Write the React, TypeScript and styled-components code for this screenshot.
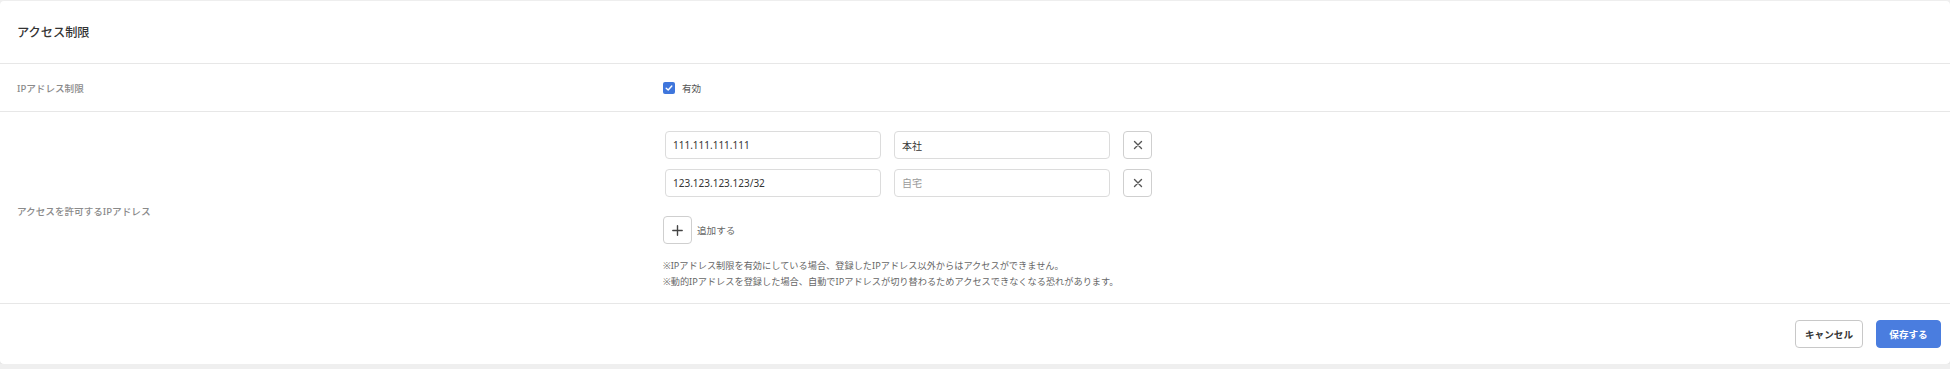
import React from "react";
import styled, { createGlobalStyle } from "styled-components";

const GlobalStyle = createGlobalStyle`
  html, body { margin: 0; padding: 0; }
  body {
    background: #efefef;
    font-family: "Noto Sans", "Noto Sans CJK JP", sans-serif;
    color: #333;
  }
  * { box-sizing: border-box; }
`;

const Card = styled.div`
  margin-top: 1px;
  background: #fff;
  border-radius: 4px;
  box-shadow: 0 1px 2px rgba(0, 0, 0, 0.08);
`;

const Header = styled.div`
  height: 63px;
  padding: 0 17px;
  display: flex;
  align-items: center;
  border-bottom: 1px solid #e7e7e7;
`;

const Title = styled.h2`
  margin: 0;
  font-size: 12.2px;
  font-weight: 500;
  color: #333;
`;

const Row = styled.div<{ $pad: string; $height?: number }>`
  display: grid;
  grid-template-columns: 646px 1fr;
  align-items: center;
  padding: ${(p) => p.$pad};
  padding-left: 17px;
  height: ${(p) => (p.$height ? `${p.$height}px` : "auto")};
  border-bottom: 1px solid #e7e7e7;
`;

const Label = styled.div`
  font-size: 9.6px;
  font-weight: 500;
  color: #8a8a8a;
`;

const CheckWrap = styled.label`
  display: flex;
  align-items: center;
  gap: 7px;
  font-size: 9.6px;
  color: #555;
`;

const CheckBox = styled.span`
  width: 12px;
  height: 12px;
  border-radius: 2px;
  background: #3f76dc;
  display: flex;
  align-items: center;
  justify-content: center;
`;

const Value = styled.div`
  display: flex;
  flex-direction: column;
`;

const EntryList = styled.div`
  display: flex;
  flex-direction: column;
  gap: 10px;
  margin-left: 2px;
`;

const Entry = styled.div`
  display: flex;
  gap: 13px;
`;

const TextInput = styled.input`
  width: 216px;
  height: 28px;
  border: 1px solid #dcdcdc;
  border-radius: 4px;
  padding: 0 7px;
  font-family: inherit;
  font-size: 10px;
  color: #333;
  outline: none;
  &::placeholder { color: #9a9a9a; }
`;

const IconButton = styled.button`
  width: 29px;
  height: 28px;
  border: 1px solid #cfcfcf;
  border-radius: 4px;
  background: #fff;
  padding: 0;
  display: flex;
  align-items: center;
  justify-content: center;
  cursor: pointer;
`;

const AddRow = styled.div`
  margin-top: 19px;
  display: flex;
  align-items: center;
  gap: 5px;
  font-size: 9.6px;
  color: #666;
`;

const Notes = styled.div`
  margin-top: 14px;
  font-size: 9.2px;
  line-height: 16px;
  color: #666;
`;

const Footer = styled.div`
  height: 60px;
  display: flex;
  justify-content: flex-end;
  align-items: center;
  gap: 13px;
  padding-right: 9px;
`;

const Button = styled.button<{ $primary?: boolean }>`
  height: 28px;
  min-width: 65px;
  padding: 0 9px;
  border-radius: 4px;
  font-family: inherit;
  font-size: 9.6px;
  font-weight: 700;
  cursor: pointer;
  border: 1px solid ${(p) => (p.$primary ? "#4a7ddf" : "#c8c8c8")};
  background: ${(p) => (p.$primary ? "#4a7ddf" : "#fff")};
  color: ${(p) => (p.$primary ? "#fff" : "#333")};
`;

const XIcon = () => (
  <svg width="10" height="10" viewBox="0 0 10 10">
    <path d="M1.5 1.5 L8.5 8.5 M8.5 1.5 L1.5 8.5" stroke="#555" strokeWidth="1.4" strokeLinecap="round" />
  </svg>
);

const PlusIcon = () => (
  <svg width="11" height="11" viewBox="0 0 11 11">
    <path d="M5.5 0.8 V10.2 M0.8 5.5 H10.2" stroke="#444" strokeWidth="1.4" strokeLinecap="round" />
  </svg>
);

const entries = [
  { ip: "111.111.111.111", name: "本社" },
  { ip: "123.123.123.123/32", name: "" },
];

export default function App() {
  return (
    <>
      <GlobalStyle />
      <Card>
        <Header>
          <Title>アクセス制限</Title>
        </Header>
        <Row $pad="0" $height={48}>
          <Label>IPアドレス制限</Label>
          <CheckWrap>
            <CheckBox>
              <svg width="8" height="8" viewBox="0 0 8 8">
                <path d="M1.2 4.2 L3.2 6 L6.8 2" stroke="#fff" strokeWidth="1.4" fill="none" strokeLinecap="round" strokeLinejoin="round" />
              </svg>
            </CheckBox>
            有効
          </CheckWrap>
        </Row>
        <Row $pad="19px 0 13px">
          <Label>アクセスを許可するIPアドレス</Label>
          <Value>
            <EntryList>
              {entries.map((e, i) => (
                <Entry key={i}>
                  <TextInput defaultValue={e.ip} />
                  <TextInput defaultValue={e.name} placeholder={e.name ? "" : "自宅"} />
                  <IconButton aria-label="削除">
                    <XIcon />
                  </IconButton>
                </Entry>
              ))}
            </EntryList>
            <AddRow>
              <IconButton aria-label="追加">
                <PlusIcon />
              </IconButton>
              追加する
            </AddRow>
            <Notes>
              <div>※IPアドレス制限を有効にしている場合、登録したIPアドレス以外からはアクセスができません。</div>
              <div>※動的IPアドレスを登録した場合、自動でIPアドレスが切り替わるためアクセスできなくなる恐れがあります。</div>
            </Notes>
          </Value>
        </Row>
        <Footer>
          <Button>キャンセル</Button>
          <Button $primary>保存する</Button>
        </Footer>
      </Card>
    </>
  );
}
